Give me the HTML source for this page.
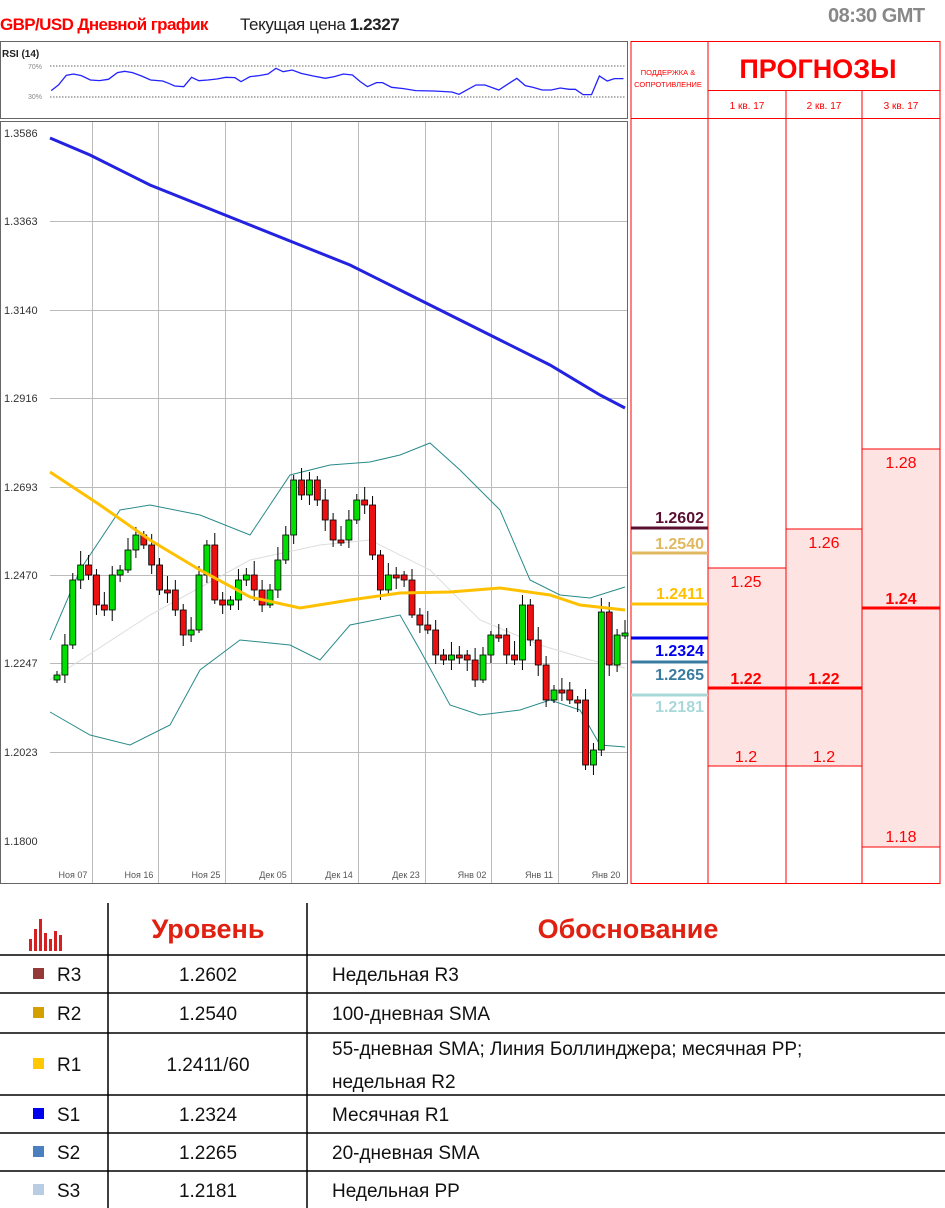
<!DOCTYPE html>
<html><head><meta charset="utf-8">
<style>
body{margin:0;width:945px;height:1208px;background:#fff;position:relative;overflow:hidden;font-family:"Liberation Sans","DejaVu Sans",sans-serif}
.a{position:absolute}
</style></head><body>
<div class="a" style="left:0;top:15px;font-size:17px;font-weight:bold;color:#f00;letter-spacing:-0.6px">GBP/USD Дневной график</div>
<div class="a" style="left:240px;top:15px;font-size:17px;color:#222;letter-spacing:-0.4px">Текущая цена <b>1.2327</b></div>
<div class="a" style="left:828px;top:5px;font-size:20px;font-weight:bold;color:#888;letter-spacing:-0.5px">08:30 GMT</div>

<svg class="a" style="left:0;top:0" width="945" height="890">
<rect x="0.5" y="41.5" width="627" height="77" fill="none" stroke="#666"/>
<text x="2" y="57" font-size="10" font-weight="bold" fill="#222" font-family="Liberation Sans">RSI (14)</text>
<text x="28" y="69" font-size="7" fill="#888">70%</text>
<text x="28" y="99" font-size="7" fill="#888">30%</text>
<line x1="50" y1="66" x2="625" y2="66" stroke="#666" stroke-dasharray="1.5,1.5"/>
<line x1="50" y1="97" x2="625" y2="97" stroke="#666" stroke-dasharray="1.5,1.5"/>
<g transform="scale(0.6024,0.3333)"><polyline fill="none" stroke="#22f" stroke-width="1.3" vector-effect="non-scaling-stroke" points="85,272 97,255 110,226 122,222 135,227 150,240 165,242 180,238 195,218 207,214 220,218 235,228 250,240 270,243 280,250 290,258 305,260 318,232 330,242 345,240 360,237 375,232 390,233 400,245 415,230 430,227 445,222 458,205 470,215 485,210 500,220 520,228 540,235 555,230 570,222 585,225 598,245 610,260 625,248 635,248 650,262 670,266 690,272 720,273 750,276 762,283 775,270 790,255 805,255 828,270 845,250 858,235 872,257 885,262 900,270 915,270 930,264 945,268 955,268 968,284 982,284 995,228 1008,243 1020,236 1035,236"/></g>
<rect x="0.5" y="121.5" width="627" height="762" fill="none" stroke="#666"/>
<g id="grid" stroke="#bbb" stroke-width="1"></g>
<g font-size="11" fill="#333" font-family="Liberation Sans">
<text x="4" y="137">1.3586</text><text x="4" y="225">1.3363</text><text x="4" y="314">1.3140</text><text x="4" y="402">1.2916</text><text x="4" y="491">1.2693</text><text x="4" y="579">1.2470</text><text x="4" y="667">1.2247</text><text x="4" y="756">1.2023</text><text x="4" y="845">1.1800</text>
</g>
<g font-size="9" fill="#555" font-family="Liberation Sans" text-anchor="middle">
<text x="73" y="878">Ноя 07</text><text x="139" y="878">Ноя 16</text><text x="206" y="878">Ноя 25</text><text x="273" y="878">Дек 05</text><text x="339" y="878">Дек 14</text><text x="406" y="878">Дек 23</text><text x="472" y="878">Янв 02</text><text x="539" y="878">Янв 11</text><text x="606" y="878">Янв 20</text>
</g>
<polyline fill="none" stroke="#ddd" stroke-width="1" points="50,680 150,615 250,560 320,545 370,540 430,570 480,620 540,645 590,660 625,668"/>
<polyline fill="none" stroke="#2a8a8a" stroke-width="1" points="50,640 80,570 120,510 150,505 200,515 250,535 290,475 330,465 370,462 400,455 430,443 460,470 500,510 530,580 560,595 590,598 625,587"/>
<polyline fill="none" stroke="#2a8a8a" stroke-width="1" points="50,712 90,735 130,745 170,725 200,670 240,640 290,645 320,660 350,625 400,615 420,650 450,705 480,715 520,710 550,700 580,710 600,745 625,747"/>
<g id="c"></g>
<polyline fill="none" stroke="#ffc000" stroke-width="3" points="50,472 100,505 150,540 200,570 250,597 300,608 350,600 400,593 450,592 500,588 550,595 580,605 625,610"/>
<polyline fill="none" stroke="#2222e0" stroke-width="3" points="50,138 90,155 150,185 200,205 250,225 300,245 350,265 400,290 450,315 500,340 550,365 600,395 625,408"/>

<rect x="631" y="41.5" width="309" height="842" fill="none" stroke="#f00"/>
<rect x="708" y="568" width="78" height="198" fill="#fee3e3" stroke="#f00"/>
<rect x="786" y="529" width="76" height="237" fill="#fee3e3" stroke="#f00"/>
<rect x="862" y="449" width="78" height="398" fill="#fee3e3" stroke="#f00"/>
<g stroke="#f00"><line x1="708" y1="41" x2="708" y2="884"/><line x1="786" y1="90" x2="786" y2="884"/><line x1="862" y1="90" x2="862" y2="884"/><line x1="708" y1="90.5" x2="940" y2="90.5"/><line x1="631" y1="118.5" x2="940" y2="118.5"/></g>
<text x="668" y="75" font-size="7.5" fill="#f00" text-anchor="middle" font-family="Liberation Sans">ПОДДЕРЖКА &amp;</text>
<text x="668" y="87" font-size="7.5" fill="#f00" text-anchor="middle" font-family="Liberation Sans">СОПРОТИВЛЕНИЕ</text>
<text x="818" y="78" font-size="27" font-weight="bold" fill="#f00" text-anchor="middle" font-family="Liberation Sans">ПРОГНОЗЫ</text>
<g font-size="10" fill="#f00" text-anchor="middle" font-family="Liberation Sans"><text x="747" y="109">1 кв. 17</text><text x="824" y="109">2 кв. 17</text><text x="901" y="109">3 кв. 17</text></g>
<g stroke-width="3"><line x1="631" y1="528" x2="708" y2="528" stroke="#5a1030"/><line x1="631" y1="553" x2="708" y2="553" stroke="#e0b860"/><line x1="631" y1="604" x2="708" y2="604" stroke="#ffc000"/><line x1="631" y1="638" x2="708" y2="638" stroke="#0000ee"/><line x1="631" y1="662" x2="708" y2="662" stroke="#3a7ca0"/><line x1="631" y1="695" x2="708" y2="695" stroke="#a8d8d8"/>
<line x1="708" y1="688" x2="862" y2="688" stroke="#f00"/><line x1="862" y1="608" x2="940" y2="608" stroke="#f00"/></g>
<g font-size="16" font-weight="bold" text-anchor="end" font-family="Liberation Sans"><text x="704" y="523" fill="#5a1030">1.2602</text><text x="704" y="549" fill="#e0b860">1.2540</text><text x="704" y="599" fill="#ffc000">1.2411</text><text x="704" y="656" fill="#0000ee">1.2324</text><text x="704" y="680" fill="#3a7ca0">1.2265</text><text x="704" y="712" fill="#a8d8d8">1.2181</text></g>
<g font-size="16" fill="#f00" text-anchor="middle" font-family="Liberation Sans"><text x="746" y="587">1.25</text><text x="824" y="548">1.26</text><text x="901" y="468">1.28</text><text x="746" y="762">1.2</text><text x="824" y="762">1.2</text><text x="901" y="842">1.18</text>
<g font-weight="bold"><text x="746" y="684">1.22</text><text x="824" y="684">1.22</text><text x="901" y="604">1.24</text></g></g>
</svg>

<svg class="a" style="left:0;top:895px" width="945" height="313">
<g fill="#d42020"><rect x="29" y="44" width="3" height="12"/><rect x="34" y="34" width="3" height="22"/><rect x="39" y="24" width="3" height="32"/><rect x="44" y="38" width="3" height="18"/><rect x="49" y="44" width="3" height="12"/><rect x="54" y="36" width="3" height="20"/><rect x="59" y="40" width="3" height="16"/></g>
<g stroke="#000" stroke-width="1.5"><line x1="108" y1="8" x2="108" y2="313"/><line x1="307" y1="8" x2="307" y2="313"/><line x1="0" y1="60" x2="945" y2="60"/><line x1="0" y1="98" x2="945" y2="98"/><line x1="0" y1="138" x2="945" y2="138"/><line x1="0" y1="200" x2="945" y2="200"/><line x1="0" y1="238" x2="945" y2="238"/><line x1="0" y1="276" x2="945" y2="276"/></g>
<g font-size="27" font-weight="bold" fill="#e02010" text-anchor="middle" font-family="Liberation Sans"><text x="208" y="43">Уровень</text><text x="628" y="43">Обоснование</text></g>
<rect x="33" y="73" width="11" height="11" fill="#953838"/><rect x="33" y="112" width="11" height="11" fill="#d4a000"/><rect x="33" y="163" width="11" height="11" fill="#ffc800"/><rect x="33" y="213" width="11" height="11" fill="#0000ee"/><rect x="33" y="251" width="11" height="11" fill="#4a80c0"/><rect x="33" y="289" width="11" height="11" fill="#b8cce4"/>
<g font-size="19" fill="#111" font-family="Liberation Sans">
<text x="57" y="86">R3</text><text x="57" y="125">R2</text><text x="57" y="176">R1</text><text x="57" y="226">S1</text><text x="57" y="264">S2</text><text x="57" y="302">S3</text>
<g text-anchor="middle"><text x="208" y="86">1.2602</text><text x="208" y="125">1.2540</text><text x="208" y="176">1.2411/60</text><text x="208" y="226">1.2324</text><text x="208" y="264">1.2265</text><text x="208" y="302">1.2181</text></g>
<text x="332" y="86">Недельная R3</text><text x="332" y="125">100-дневная SMA</text><text x="332" y="160">55-дневная SMA; Линия Боллинджера; месячная PP;</text><text x="332" y="193">недельная R2</text><text x="332" y="226">Месячная R1</text><text x="332" y="264">20-дневная SMA</text><text x="332" y="302">Недельная PP</text>
</g>
</svg>
<script>
(function(){
var ns="http://www.w3.org/2000/svg";
function el(p,t,a){var e=document.createElementNS(ns,t);for(var k in a)e.setAttribute(k,a[k]);p.appendChild(e);return e;}
var g=document.getElementById("grid");
[221,310,398,487,575,663,752].forEach(function(y){el(g,"line",{x1:50,y1:y+.5,x2:627,y2:y+.5});});
[92,158,225,291,358,425,491,558].forEach(function(x){el(g,"line",{x1:x+.5,y1:122,x2:x+.5,y2:883});});
var c=document.getElementById("c");
var ys=[675,645,580,565,575,605,610,575,570,550,535,545,565,590,590,610,635,630,575,545,600,605,600,580,575,590,605,590,560,535,480,495,480,500,520,540,540,520,500,505,555,590,575,575,580,615,625,630,655,660,655,655,660,680,655,635,635,655,660,605,640,665,700,690,690,700,700,765,750,612,665,635,633];
var n=ys.length,prev=680;
for(var i=0;i<n;i++){var x=57+i*(568/(n-1));var o=prev,cl=ys[i];var tp=Math.min(o,cl),bt=Math.max(o,cl);if(bt-tp<3)bt=tp+3;
el(c,"line",{x1:x,y1:tp-4-(i*7%11),x2:x,y2:bt+3+(i*5%9),stroke:"#000","stroke-width":1});
el(c,"rect",{x:x-3,y:tp,width:6,height:bt-tp,fill:cl<o?"#00e000":"#ee1010",stroke:"#000","stroke-width":0.8});prev=cl;}
})();
</script>
</body></html>
